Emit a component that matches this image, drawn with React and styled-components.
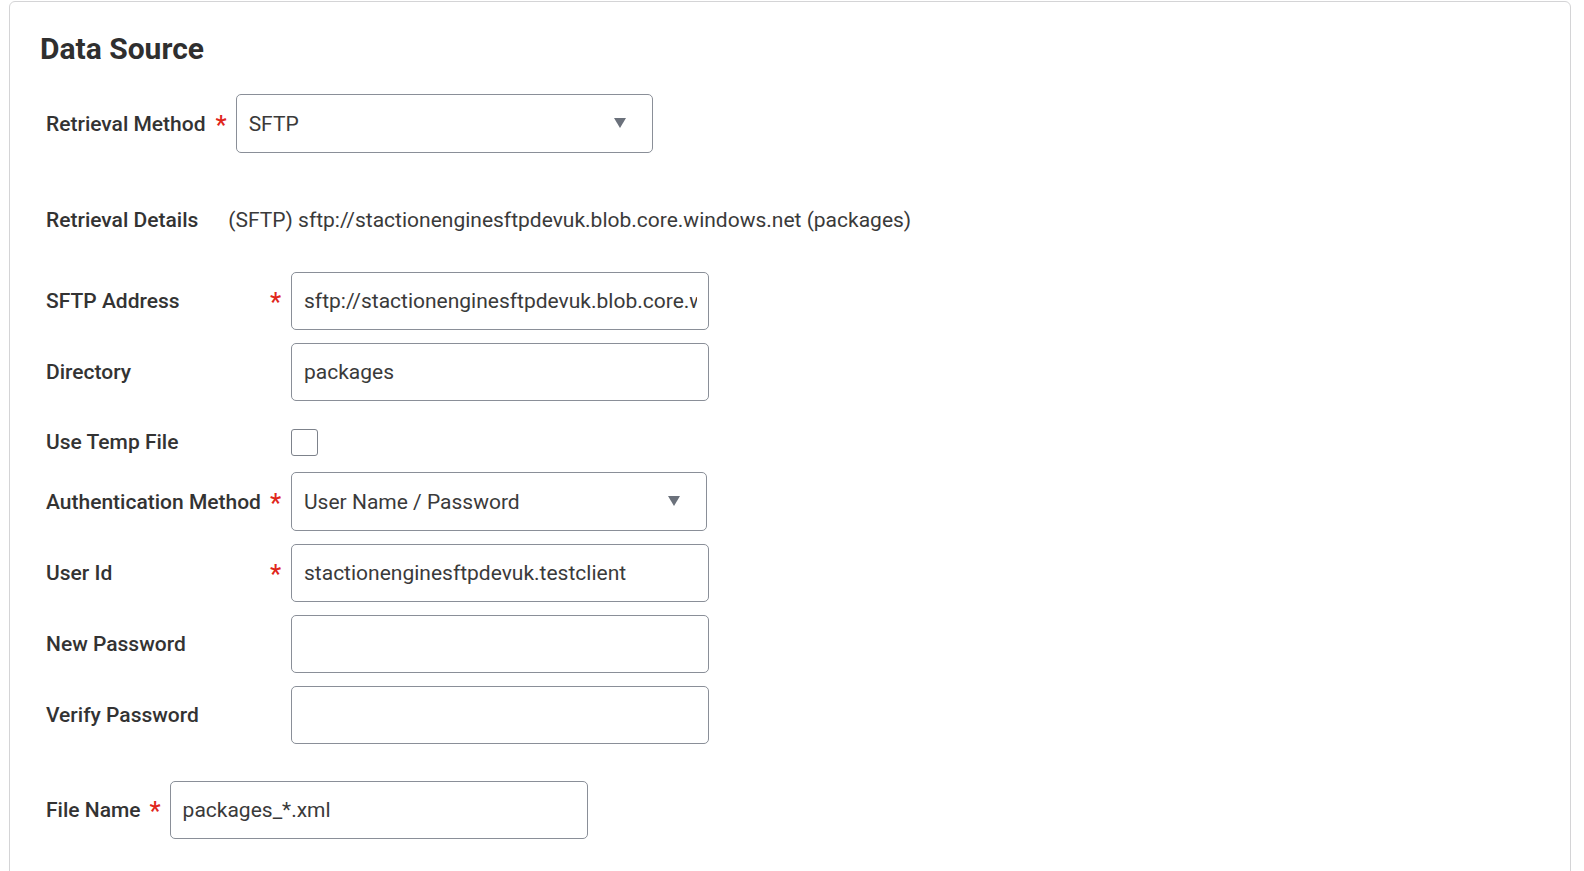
import styled, { createGlobalStyle } from "styled-components";

const GlobalStyle = createGlobalStyle`
  html, body {
    margin: 0;
    padding: 0;
    background: #ffffff;
    font-family: Roboto, "Liberation Sans", sans-serif;
    color: #333333;
  }
`;

const Page = styled.div`
  padding: 1px 13px 0 9px;
  height: 870px;
  overflow: hidden;
`;

const Card = styled.section`
  border: 1px solid #d4d4d6;
  border-radius: 6px;
  padding: 30px 30px 0 30px;
  height: 900px;
  box-sizing: border-box;
`;

const Title = styled.h2`
  margin: 0;
  font-size: 30px;
  line-height: 34px;
  font-weight: 700;
  color: #2f2f2f;
`;

const Body = styled.div`
  padding-left: 6px;
`;

const InlineRow = styled.div`
  display: flex;
  align-items: center;
  gap: 9px;
  margin-top: ${(p) => p.$top}px;
`;

const Label = styled.span`
  font-size: 21px;
  font-weight: 500;
  line-height: 24px;
  color: #333333;
  white-space: nowrap;
`;

const Required = styled.span`
  color: #e0261b;
  font-size: 25px;
  font-weight: 500;
  line-height: 24px;
  height: 24px;
  padding-top: 2px;
  margin-left: ${(p) => (p.$inline ? 1 : 0)}px;
  box-sizing: border-box;
`;

const DetailRow = styled.div`
  display: flex;
  align-items: center;
  gap: 30px;
  margin-top: 55px;
  line-height: 24px;
`;

const DetailValue = styled.span`
  font-size: 21px;
  color: #3a3a3a;
`;

const Group = styled.div`
  display: flex;
  flex-direction: column;
  gap: 13px;
  margin-top: 40px;
`;

const GroupRow = styled.div`
  display: flex;
  align-items: center;
  box-sizing: border-box;
  min-height: ${(p) => (p.$short ? 45 : 58)}px;
  padding-top: ${(p) => (p.$short ? 11 : 0)}px;
`;

const LabelCell = styled.div`
  width: 245px;
  flex: none;
  display: flex;
  align-items: center;
  justify-content: space-between;
  padding-right: 10px;
  box-sizing: border-box;
`;

const TextInput = styled.input`
  width: ${(p) => p.$w || 418}px;
  height: 58px;
  box-sizing: border-box;
  border: 1px solid #8a8f98;
  border-radius: 5px;
  padding: 0 11px 0 12px;
  font-family: Roboto, "Liberation Sans", sans-serif;
  font-size: 21px;
  color: #3a3a3a;
  background: #ffffff;
  outline: none;
`;

const SelectBox = styled.div`
  width: ${(p) => p.$w}px;
  height: 59px;
  box-sizing: border-box;
  border: 1px solid #8a8f98;
  border-radius: 5px;
  padding: 0 26px 0 12px;
  display: flex;
  align-items: center;
  justify-content: space-between;
  font-size: 21px;
  color: #3a3a3a;
`;

const Caret = styled.svg`
  width: 12px;
  height: 10px;
  fill: #6b717b;
  margin-top: -2px;
`;

const Checkbox = styled.span`
  display: block;
  width: 27px;
  height: 27px;
  box-sizing: border-box;
  border: 1px solid #7d828b;
  border-radius: 3px;
  background: #ffffff;
`;

const Select = ({ value, width }) => (
  <SelectBox $w={width}>
    <span>{value}</span>
    <Caret viewBox="0 0 12 10">
      <polygon points="0,0 12,0 6,10" />
    </Caret>
  </SelectBox>
);

const Field = ({ label, required, short, children }) => (
  <GroupRow $short={short}>
    <LabelCell>
      <Label>{label}</Label>
      {required && <Required>*</Required>}
    </LabelCell>
    {children}
  </GroupRow>
);

const App = () => {
  return (
    <>
      <GlobalStyle />
      <Page>
        <Card>
          <Title>Data Source</Title>
          <Body>
            <InlineRow $top={28}>
              <Label>Retrieval Method</Label>
              <Required $inline>*</Required>
              <Select value="SFTP" width={417} />
            </InlineRow>

            <DetailRow>
              <Label>Retrieval Details</Label>
              <DetailValue>
                (SFTP) sftp://stactionenginesftpdevuk.blob.core.windows.net (packages)
              </DetailValue>
            </DetailRow>

            <Group>
              <Field label="SFTP Address" required>
                <TextInput readOnly defaultValue="sftp://stactionenginesftpdevuk.blob.core.windows.net" />
              </Field>
              <Field label="Directory">
                <TextInput readOnly defaultValue="packages" />
              </Field>
              <Field label="Use Temp File" short>
                <Checkbox />
              </Field>
              <Field label="Authentication Method" required>
                <Select value="User Name / Password" width={416} />
              </Field>
              <Field label="User Id" required>
                <TextInput readOnly defaultValue="stactionenginesftpdevuk.testclient" />
              </Field>
              <Field label="New Password">
                <TextInput readOnly type="password" />
              </Field>
              <Field label="Verify Password">
                <TextInput readOnly type="password" />
              </Field>
            </Group>

            <InlineRow $top={37}>
              <Label>File Name</Label>
              <Required>*</Required>
              <TextInput readOnly defaultValue="packages_*.xml" />
            </InlineRow>
          </Body>
        </Card>
      </Page>
    </>
  );
};

export default App;
